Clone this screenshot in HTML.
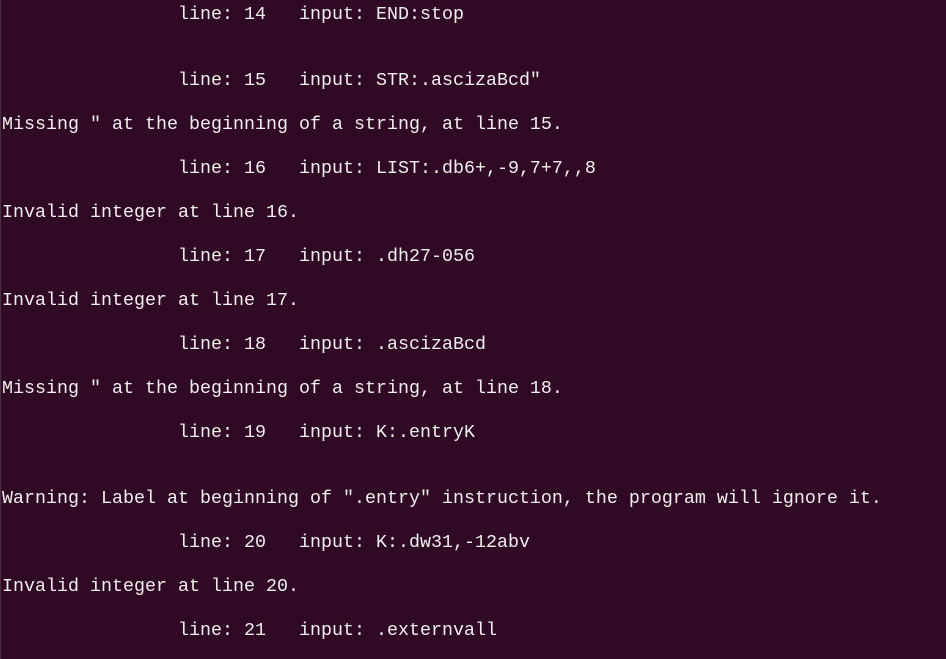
<!DOCTYPE html>
<html><head><style>
html,body{margin:0;padding:0;}
body{width:946px;height:659px;background:#300a24;overflow:hidden;border-left:1px solid #4a3040;box-sizing:border-box;}
pre{margin:0;position:absolute;left:2px;top:4px;font-family:"Liberation Mono",monospace;font-size:18.33px;line-height:22px;color:#eeeeec;white-space:pre;}
</style></head><body>
<pre>                line: 14   input: END:stop


                line: 15   input: STR:.ascizaBcd"

Missing " at the beginning of a string, at line 15.

                line: 16   input: LIST:.db6+,-9,7+7,,8

Invalid integer at line 16.

                line: 17   input: .dh27-056

Invalid integer at line 17.

                line: 18   input: .ascizaBcd

Missing " at the beginning of a string, at line 18.

                line: 19   input: K:.entryK


Warning: Label at beginning of ".entry" instruction, the program will ignore it.

                line: 20   input: K:.dw31,-12abv

Invalid integer at line 20.

                line: 21   input: .externvall</pre>
</body></html>
